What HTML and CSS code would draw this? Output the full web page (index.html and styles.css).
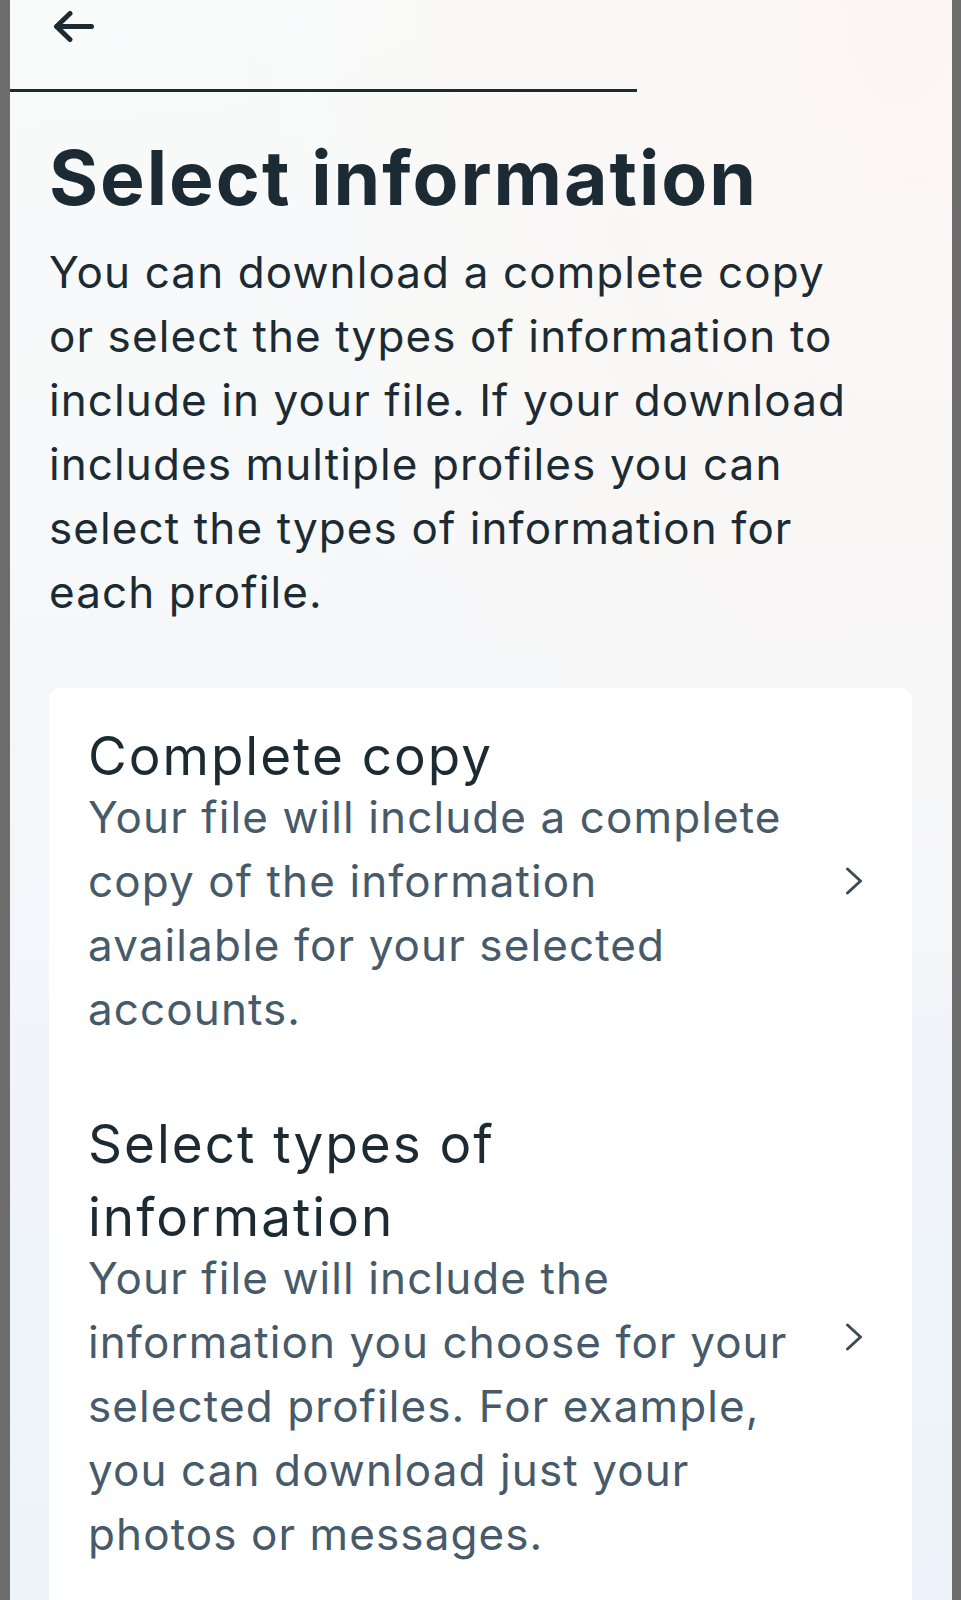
FILE: index.html
```html
<!DOCTYPE html>
<html lang="en">
<head>
  <meta charset="UTF-8">
  <title>Select information</title>
  <link rel="stylesheet" href="styles.css">
</head>
<body>
<div class="screen">
  <header class="topbar">
    <button class="back" aria-label="Back">
      <svg width="41" height="31" viewBox="0 0 41 31" fill="none" stroke="#1c2b33" stroke-width="5" stroke-linecap="round" stroke-linejoin="round">
        <path d="M4 15.5H38.5"/>
        <path d="M17 2.5L3.5 15.5L17 28.5"/>
      </svg>
    </button>
  </header>
  <div class="progress"><div class="progress-fill" style="width: 66.6%"></div></div>

  <main class="content">
    <h1>Select information</h1>
    <p class="intro">You can download a complete copy or select the types of information to include in your file. If your download includes multiple profiles you can select the types of information for each profile.</p>

    <div class="card">
      <a class="option" href="#">
        <div class="option-text">
          <h2>Complete copy</h2>
          <p>Your file will include a complete copy of the information available for your selected accounts.</p>
        </div>
        <svg class="chevron" width="18" height="28" viewBox="0 0 18 28" fill="none" stroke="#3d4b57" stroke-width="3" stroke-linecap="round" stroke-linejoin="round">
          <path d="M2.5 2L15.5 14L2.5 26"/>
        </svg>
      </a>
      <a class="option" href="#">
        <div class="option-text">
          <h2>Select types of information</h2>
          <p>Your file will include the information you choose for your selected profiles. For example, you can download just your photos or messages.</p>
        </div>
        <svg class="chevron" width="18" height="28" viewBox="0 0 18 28" fill="none" stroke="#3d4b57" stroke-width="3" stroke-linecap="round" stroke-linejoin="round">
          <path d="M2.5 2L15.5 14L2.5 26"/>
        </svg>
      </a>
    </div>
  </main>
</div>
</body>
</html>
```

FILE: styles.css
```css
body {
  margin: 0;
  background-color: #6d6d6d;
  font-family: Inter, "Noto Sans", sans-serif;
  color: #1c2b33;
}

.screen {
  margin: 0 9px 0 10px;
  height: 1600px;
  overflow: hidden;
  background:
    radial-gradient(ellipse at 95% 0%, rgba(252, 246, 243, 0.9), rgba(252, 246, 243, 0) 55%),
    linear-gradient(175deg, #f9fbfb 0%, #f6f8f9 35%, #f0f4fa 70%, #eef3fb 100%);
}

.topbar {
  height: 89px;
  padding: 11px 0 0 43px;
  box-sizing: border-box;
}

.back {
  padding: 0;
  border: none;
  background: none;
  cursor: pointer;
  display: block;
}

.back svg {
  display: block;
}

.progress {
  height: 3px;
}

.progress-fill {
  height: 100%;
  background-color: #1c2b33;
}

.content {
  padding: 0 40px 0 39px;
}

h1 {
  margin: 41px 0 0;
  font-size: 75px;
  line-height: 90px;
  font-weight: 700;
  letter-spacing: 2px;
}

.intro {
  margin: 17px 0 0;
  max-width: 805px;
  font-size: 44px;
  line-height: 64px;
  letter-spacing: 1.1px;
}

.card {
  margin-top: 64px;
  background-color: white;
  border-radius: 12px;
  padding: 0 49px 30px 39px;
}

.option {
  display: flex;
  align-items: center;
  gap: 51px;
  padding: 32px 0 35px;
  color: inherit;
  text-decoration: none;
}

.option-text {
  flex: 1;
}

.option h2 {
  margin: 0 0 -8px;
  font-size: 53px;
  line-height: 73px;
  font-weight: 400;
  letter-spacing: 2px;
}

.option p {
  margin: 0;
  font-size: 44px;
  line-height: 64px;
  letter-spacing: 1.1px;
  color: #465a69;
}

.chevron {
  flex-shrink: 0;
  display: block;
}
```
